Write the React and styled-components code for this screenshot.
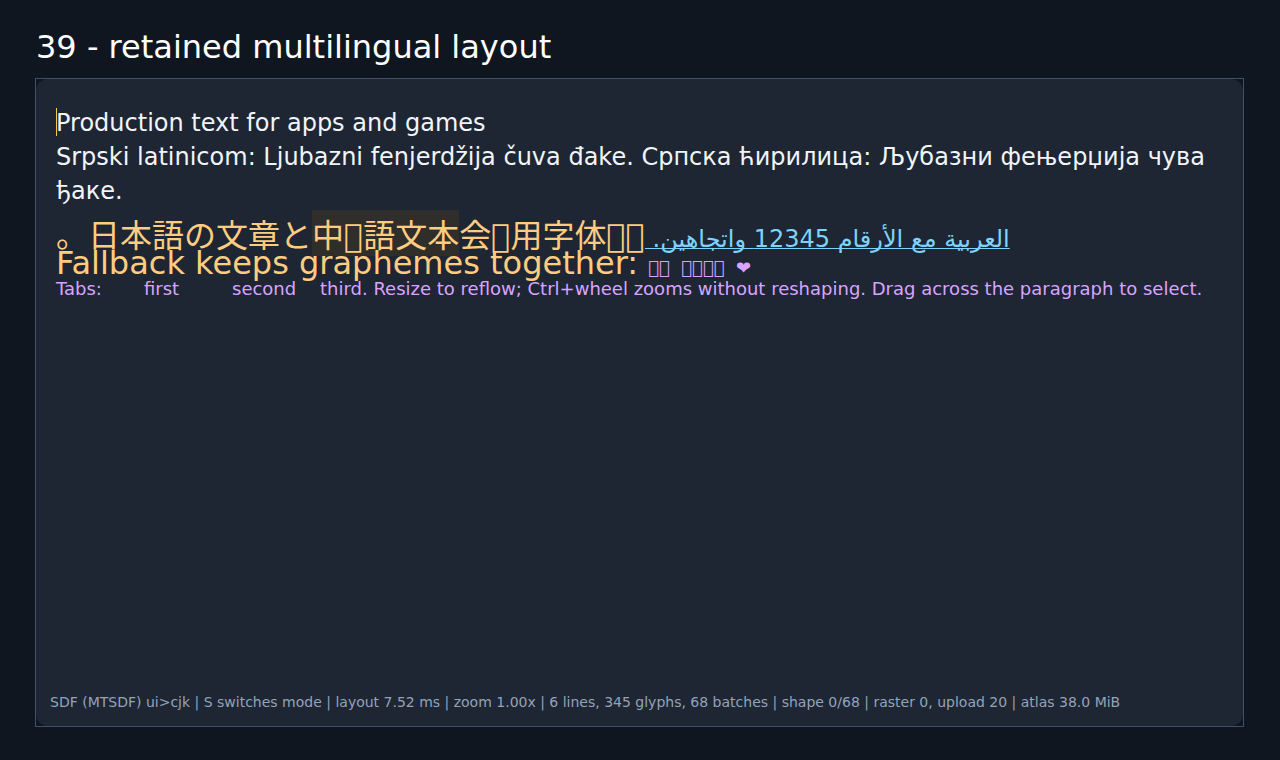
import React from "react";
import styled, { createGlobalStyle } from "styled-components";

const GlobalStyle = createGlobalStyle`
  body {
    margin: 0;
    background: #101620;
  }

  * {
    box-sizing: border-box;
  }
`;

const Page = styled.div`
  min-height: 100vh;
  display: flex;
  flex-direction: column;
  padding: 24px 36px 33px 35px;
  font-family: "DejaVu Sans", sans-serif;
`;

const Title = styled.h1`
  margin: 0;
  padding: 0 1px 8px;
  font-size: 32px;
  line-height: 46px;
  font-weight: 400;
  color: #ffffff;
`;

/* Square outline around a rounded surface */
const Frame = styled.main`
  flex: 1;
  display: flex;
  border: 1px solid #3d5168;
`;

const Surface = styled.div`
  flex: 1;
  display: flex;
  flex-direction: column;
  justify-content: space-between;
  padding: 27px 20px 12px;
  border-radius: 12px;
  background: #1e2634;
`;

const Line = styled.p`
  margin: ${(props) => props.$top || 0}px 0 0;
  font-size: ${(props) => props.$size}px;
  line-height: ${(props) => props.$leading}px;
  color: ${(props) => props.$color};
  white-space: pre-wrap;
  tab-size: 88px;
`;

const Caret = styled.span`
  display: inline-block;
  width: 1px;
  height: 28px;
  margin-right: -1px;
  vertical-align: -5px;
  background: #ffc44d;
`;

const Cjk = styled.span`
  font-family: "Noto Sans CJK JP", sans-serif;
  line-height: 0;
  background: ${(props) => (props.$selected ? "#2f2e2b" : "transparent")};
`;

const Missing = styled.span`
  font-family: "DejaVu Sans", sans-serif;
`;

const Arabic = styled.a`
  font-size: 24px;
  line-height: 0;
  color: #7dd3fc;
  text-decoration: underline;
  text-decoration-thickness: 1px;
  text-decoration-skip-ink: none;
  unicode-bidi: isolate;
`;

const Emoji = styled.span`
  font-size: 18px;
  line-height: 0;
  color: #d8a4ff;
`;

const Status = styled.footer`
  margin-left: -6px;
  font-size: 14px;
  line-height: 24px;
  color: #94a3b8;
`;

const BOX = "\uE900";

export default function App() {
  return (
    <>
      <GlobalStyle />
      <Page>
        <Title>39 - retained multilingual layout</Title>
        <Frame>
          <Surface>
            <article>
              <Line $size={24} $leading={34} $color="#f1f5f9">
                <Caret />
                Production text for apps and games
              </Line>
              <Line $size={24} $leading={34} $color="#f1f5f9">
                Srpski latinicom: Ljubazni fenjerdžija čuva đake. Српска
                ћирилица: Љубазни фењерџија чува ђаке.
              </Line>
              <Line $size={32} $leading={34} $top={11} $color="#ffcc80">
                <Cjk lang="ja">。日本語の文章と</Cjk>
                <Cjk lang="ja" $selected>
                  中<Missing>{BOX}</Missing>語文本
                </Cjk>
                <Cjk lang="ja">
                  会<Missing>{BOX}</Missing>用字体
                  <Missing>{BOX + BOX}</Missing>
                </Cjk>
                <Arabic href="#" dir="rtl" lang="ar">
                  {"العربية مع الأرقام 12345 واتجاهين.\u00A0"}
                </Arabic>
              </Line>
              <Line $size={32} $leading={20} $color="#ffcc80">
                {"Fallback keeps graphemes together: "}
                <Emoji>{`${BOX}${BOX}  ${BOX}${BOX}${BOX}${BOX}  \u2764`}</Emoji>
              </Line>
              <Line $size={18} $leading={32} $color="#d8a4ff">
                {"Tabs:\tfirst\tsecond\tthird. Resize to reflow; Ctrl+wheel zooms without reshaping. Drag across the paragraph to select."}
              </Line>
            </article>
            <Status>
              SDF (MTSDF) ui&gt;cjk | S switches mode | layout 7.52 ms | zoom
              1.00x | 6 lines, 345 glyphs, 68 batches | shape 0/68 | raster 0,
              upload 20 | atlas 38.0 MiB
            </Status>
          </Surface>
        </Frame>
      </Page>
    </>
  );
}
